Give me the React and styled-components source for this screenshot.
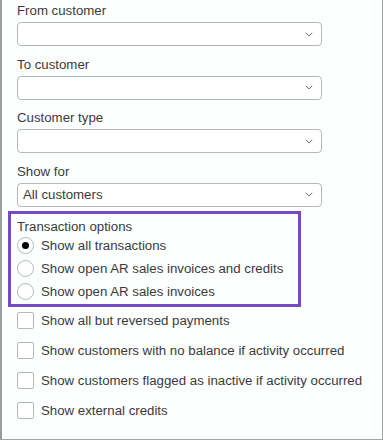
import React from 'react';
import styled, { createGlobalStyle } from 'styled-components';

const GlobalStyle = createGlobalStyle`
  html, body {
    margin: 0;
    padding: 0;
    background: #ffffff;
  }
  body {
    font-family: "Liberation Sans", Arial, sans-serif;
    font-size: 13.25px;
    color: #393a3d;
  }
`;

const Panel = styled.div`
  box-sizing: border-box;
  width: 383px;
  height: 440px;
  background: #fdfefe;
  border-left: 2px solid #9a9c9e;
  border-right: 1px solid #a3a5a7;
  border-bottom: 1px solid #a3a5a7;
  padding: 3px 0 0 15px;
  display: flex;
  flex-direction: column;
`;

const Fields = styled.div`
  display: flex;
  flex-direction: column;
  gap: 10.5px;
  margin-bottom: 4px;
`;

const Field = styled.div`
  display: flex;
  flex-direction: column;
`;

const Label = styled.div`
  line-height: 16px;
  margin-bottom: 3px;
  color: #393a3d;
`;

const SelectBox = styled.div`
  box-sizing: border-box;
  width: 305px;
  height: 24px;
  border: 1px solid #b3b8bd;
  border-radius: 4px;
  background: #fff;
  display: flex;
  align-items: center;
  justify-content: space-between;
  padding: 0 8px 0 5px;
  color: #393a3d;
`;

const Chevron = () => (
  <svg width="8" height="5" viewBox="0 0 8 5" fill="none">
    <path d="M0.8 0.8 L4 3.9 L7.2 0.8" stroke="#6b6c72" strokeWidth="1" />
  </svg>
);

const Select = ({ value }) => (
  <SelectBox>
    <span>{value}</span>
    <Chevron />
  </SelectBox>
);

const Highlight = styled.div`
  box-sizing: border-box;
  width: 293px;
  margin-left: -9px;
  border: 3px solid #7549c7;
  padding: 5px 0 1px 6px;
  display: flex;
  flex-direction: column;
`;

const GroupTitle = styled.div`
  line-height: 15px;
`;

const RadioRow = styled.label`
  display: flex;
  align-items: center;
  height: 23px;
  gap: 7px;
`;

const RadioCircle = styled.span`
  box-sizing: border-box;
  width: 17px;
  height: 17px;
  border-radius: 50%;
  border: 1px solid #b3b8bd;
  background: #fff;
  display: flex;
  align-items: center;
  justify-content: center;
  &::after {
    content: '';
    width: 7px;
    height: 7px;
    border-radius: 50%;
    background: ${p => (p.$checked ? '#000' : 'transparent')};
  }
`;

const CheckList = styled.div`
  display: flex;
  flex-direction: column;
  gap: 13px;
  margin-top: 5px;
`;

const CheckRow = styled.label`
  display: flex;
  align-items: center;
  height: 17px;
  gap: 7px;
`;

const CheckSquare = styled.span`
  box-sizing: border-box;
  width: 17px;
  height: 17px;
  border: 1px solid #b3b8bd;
  border-radius: 2px;
  background: #fff;
`;

const fields = [
  { label: 'From customer', value: '' },
  { label: 'To customer', value: '' },
  { label: 'Customer type', value: '' },
  { label: 'Show for', value: 'All customers' },
];

const radios = [
  { label: 'Show all transactions', checked: true },
  { label: 'Show open AR sales invoices and credits' },
  { label: 'Show open AR sales invoices' },
];

const checks = [
  'Show all but reversed payments',
  'Show customers with no balance if activity occurred',
  'Show customers flagged as inactive if activity occurred',
  'Show external credits',
];

export default function App() {
  return (
    <>
      <GlobalStyle />
      <Panel>
        <Fields>
          {fields.map(f => (
            <Field key={f.label}>
              <Label>{f.label}</Label>
              <Select value={f.value} />
            </Field>
          ))}
        </Fields>
        <Highlight>
          <GroupTitle>Transaction options</GroupTitle>
          {radios.map(r => (
            <RadioRow key={r.label}>
              <RadioCircle $checked={r.checked} />
              <span>{r.label}</span>
            </RadioRow>
          ))}
        </Highlight>
        <CheckList>
          {checks.map(c => (
            <CheckRow key={c}>
              <CheckSquare />
              <span>{c}</span>
            </CheckRow>
          ))}
        </CheckList>
      </Panel>
    </>
  );
}
